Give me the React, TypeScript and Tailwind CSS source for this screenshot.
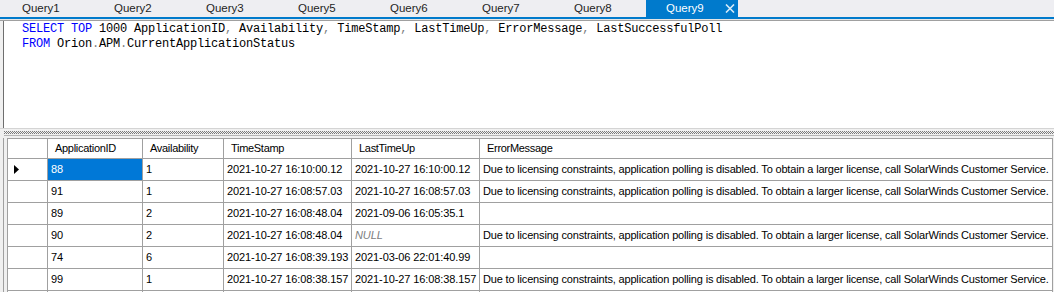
import React from "react";

const tabs = ["Query1", "Query2", "Query3", "Query5", "Query6", "Query7", "Query8", "Query9"];

const MSG =
  "Due to licensing constraints, application polling is disabled. To obtain a larger license, call SolarWinds Customer Service.";

type Row = { id: string; av: string; ts: string; up: string; err: string; nullUp?: boolean };

const rows: Row[] = [
  { id: "88", av: "1", ts: "2021-10-27 16:10:00.12", up: "2021-10-27 16:10:00.12", err: MSG },
  { id: "91", av: "1", ts: "2021-10-27 16:08:57.03", up: "2021-10-27 16:08:57.03", err: MSG },
  { id: "89", av: "2", ts: "2021-10-27 16:08:48.04", up: "2021-09-06 16:05:35.1", err: "" },
  { id: "90", av: "2", ts: "2021-10-27 16:08:48.04", up: "NULL", err: MSG, nullUp: true },
  { id: "74", av: "6", ts: "2021-10-27 16:08:39.193", up: "2021-03-06 22:01:40.99", err: "" },
  { id: "99", av: "1", ts: "2021-10-27 16:08:38.157", up: "2021-10-27 16:08:38.157", err: MSG },
  { id: "", av: "", ts: "", up: "", err: "" },
];

const cols = [
  { name: "ApplicationID", w: "w-[95px]" },
  { name: "Availability", w: "w-[81px]" },
  { name: "TimeStamp", w: "w-[128px]" },
  { name: "LastTimeUp", w: "w-[128px]" },
  { name: "ErrorMessage", w: "w-[573px]" },
];

const K = ({ children }: { children: React.ReactNode }) => <span className="text-[#0000ff]">{children}</span>;
const G = ({ children }: { children: React.ReactNode }) => <span className="text-[#808080]">{children}</span>;

export default function App() {
  return (
    <div className="w-[1054px] h-[292px] overflow-hidden bg-[#f0f0f0] flex flex-col">
      {/* Tab bar */}
      <div className="h-[17px] bg-[#eeeef2] flex pl-[2px] shrink-0 font-['Liberation_Sans',sans-serif] text-[11.5px] leading-[17px]">
        {tabs.map((t) => {
          const active = t === "Query9";
          return (
            <div
              key={t}
              className={
                "w-[92px] h-[17px] pl-[20px] flex items-center " +
                (active ? "bg-[#007acc] text-white" : "text-[#1e1e1e]")
              }
            >
              <span>{t}</span>
              {active && (
                <svg className="ml-[21px]" width="10" height="9" viewBox="0 0 10 9">
                  <path d="M1 0.5 L9 8.5 M9 0.5 L1 8.5" stroke="#d6ebf8" strokeWidth="1.6" />
                </svg>
              )}
            </div>
          );
        })}
      </div>
      <div className="h-[2px] bg-[#007acc] shrink-0" />
      <div className="h-[1px] bg-[#e6e6e6] shrink-0" />
      <div className="h-[1px] bg-[#a0a0a0] shrink-0" />

      {/* Editor */}
      <div className="h-[107px] flex shrink-0">
        <div className="w-[3px] bg-[#f0f0f0]" />
        <div className="w-[1px] bg-[#6e6e6e]" />
        <div className="flex-1 bg-white pl-[18px] pt-[1px] font-['Liberation_Mono',monospace] text-[12px] leading-[15px] tracking-[-0.2px] text-black whitespace-pre">
          <div>
            <K>SELECT</K> <K>TOP</K> 1000 ApplicationID<G>,</G> Availability<G>,</G> TimeStamp<G>,</G> LastTimeUp<G>,</G>{" "}
            ErrorMessage<G>,</G> LastSuccessfulPoll
          </div>
          <div>
            <K>FROM</K> Orion<G>.</G>APM<G>.</G>CurrentApplicationStatus
          </div>
        </div>
      </div>

      {/* Splitter */}
      <div className="h-[1px] bg-[#d4d4d4] shrink-0" />
      <div className="h-[2px] shrink-0" />
      <div className="h-[1px] shrink-0 ml-[4px] bg-[repeating-linear-gradient(90deg,#7a7a7a_0px,#7a7a7a_1px,transparent_1px,transparent_2px)]" />
      <div className="h-[1px] shrink-0 ml-[5px] bg-[repeating-linear-gradient(90deg,#7a7a7a_0px,#7a7a7a_1px,transparent_1px,transparent_2px)]" />
      <div className="h-[1px] shrink-0 ml-[4px] bg-[repeating-linear-gradient(90deg,#7a7a7a_0px,#7a7a7a_1px,transparent_1px,transparent_2px)]" />
      <div className="h-[1px] shrink-0" />
      <div className="h-[1px] bg-[#b4b4b4] shrink-0 ml-[4px]" />
      <div className="h-[2px] shrink-0" />

      {/* Grid */}
      <div className="flex flex-1 min-h-0">
        <div className="w-[3px]" />
        <div className="w-[1px] bg-[#a0a0a0]" />
        <div className="w-[3px]" />
        <div className="border-l border-t border-[#a0a0a0] font-['Liberation_Sans',sans-serif] text-[11px] text-black">
          <div className="flex h-[20px] leading-[19px] tracking-[-0.3px]">
            <div className="w-[40px] h-full bg-white border-r border-b border-[#a0a0a0]" />
            {cols.map((c) => (
              <div key={c.name} className={c.w + " h-full bg-white border-r border-b border-[#a0a0a0] pl-[7px]"}>
                {c.name}
              </div>
            ))}
          </div>
          {rows.map((r, i) => (
            <div key={i} className="flex h-[22px] leading-[21px]">
              <div className="w-[40px] h-full bg-white border-r border-b border-[#a0a0a0] flex items-center pl-[6px]">
                {i === 0 && (
                  <svg width="5" height="9" viewBox="0 0 5 9">
                    <path d="M0 0 L5 4.5 L0 9 Z" fill="#000" />
                  </svg>
                )}
              </div>
              <div
                className={
                  "w-[95px] h-full border-r border-b border-[#a0a0a0] pl-[3px] " +
                  (i === 0 ? "bg-[#0078d7] text-white" : "bg-white")
                }
              >
                {r.id}
              </div>
              <div className="w-[81px] h-full bg-white border-r border-b border-[#a0a0a0] pl-[3px]">{r.av}</div>
              <div className="w-[128px] h-full bg-white border-r border-b border-[#a0a0a0] pl-[3px] whitespace-nowrap tracking-[-0.1px]">
                {r.ts}
              </div>
              <div
                className={
                  "w-[128px] h-full bg-white border-r border-b border-[#a0a0a0] pl-[3px] whitespace-nowrap tracking-[-0.1px] " +
                  (r.nullUp ? "italic text-[#808080]" : "")
                }
              >
                {r.up}
              </div>
              <div className="w-[573px] h-full bg-white border-r border-b border-[#a0a0a0] pl-[3px] whitespace-nowrap overflow-hidden tracking-[-0.17px]">
                {r.err}
              </div>
            </div>
          ))}
        </div>
      </div>
    </div>
  );
}
